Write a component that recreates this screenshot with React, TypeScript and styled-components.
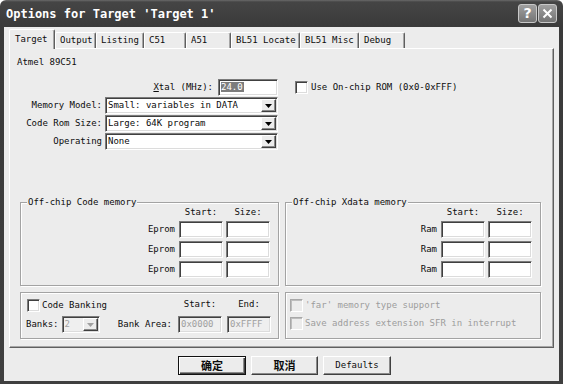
import React from 'react';
import styled, { createGlobalStyle, css } from 'styled-components';

const GlobalStyle = createGlobalStyle`
  html, body {
    margin: 0;
    padding: 0;
    background: #ffffff;
  }
  body {
    font-family: "DejaVu Sans Mono", "Liberation Mono", "Noto Sans CJK SC", monospace;
    font-size: 9px;
    line-height: 11px;
    color: #0c0c0c;
  }
`;

const sunken = css`
  box-sizing: border-box;
  border: 1px solid;
  border-color: #7b7b7b #ffffff #ffffff #7b7b7b;
  box-shadow: inset 1px 1px #404040, inset -1px -1px #dcdcdc;
`;

const raised = css`
  box-sizing: border-box;
  border: 1px solid;
  border-color: #ffffff #404040 #404040 #ffffff;
  box-shadow: inset -1px -1px #8a8a8a;
  background: #ececec;
`;

const Window = styled.div`
  width: 563px;
  height: 384px;
  box-sizing: border-box;
  display: flex;
  flex-direction: column;
  padding: 0 4px 3px;
  background: linear-gradient(#6a6a6a 0, #454545 2px, #3a3a3a 27px, #3f3f3f 100%);
  border-radius: 6px 6px 0 0;
  overflow: hidden;
`;

const TitleBar = styled.div`
  height: 27px;
  flex: none;
  display: flex;
  justify-content: space-between;
  padding: 0 2px;
`;

const TitleText = styled.div`
  color: #ffffff;
  font-size: 12px;
  font-weight: bold;
  line-height: 27px;
  padding-top: 1px;
`;

const CaptionButtons = styled.div`
  display: flex;
  gap: 1px;
  margin-top: 4px;
`;

const CaptionButton = styled.div`
  width: 19px;
  height: 19px;
  box-sizing: border-box;
  border: 1px solid #c8c8c8;
  border-radius: 3px;
  background: linear-gradient(#a0a0a0, #747474);
  color: #ffffff;
  display: flex;
  align-items: center;
  justify-content: center;
  font-family: "DejaVu Sans", sans-serif;
  font-size: 14px;
  font-weight: bold;
`;

const Client = styled.div`
  flex: 1;
  background: #ececec;
  display: flex;
  flex-direction: column;
  padding: 2px 5px 0;
`;

const TabStrip = styled.div`
  height: 19px;
  display: flex;
  align-items: flex-end;
  position: relative;
  z-index: 1;
`;

const Tab = styled.div<{ $active?: boolean; $w: number }>`
  width: ${p => p.$w}px;
  height: ${p => (p.$active ? 20 : 16)}px;
  margin-bottom: ${p => (p.$active ? -1 : 0)}px;
  box-sizing: border-box;
  padding-left: ${p => (p.$active ? 5 : 4)}px;
  padding-bottom: ${p => (p.$active ? 1 : 0)}px;
  display: flex;
  align-items: center;
  background: #ececec;
  border-top: 1px solid #ffffff;
  border-left: 1px solid #ffffff;
  border-right: 1px solid #5f5f5f;
  box-shadow: inset -1px 0 #a6a6a6;
  border-radius: 2px 2px 0 0;
`;

const Panel = styled.div`
  height: 300px;
  box-sizing: border-box;
  border: 1px solid;
  border-color: #ffffff #5f5f5f #5f5f5f #ffffff;
  box-shadow: inset -1px -1px #a6a6a6;
  padding: 8px 0 0 7px;
  display: flex;
  flex-direction: column;
`;

const DeviceName = styled.div`
  height: 11px;
`;

const FormGrid = styled.div`
  margin-top: 11px;
  display: grid;
  grid-template-columns: 85px 173px auto;
  grid-template-rows: repeat(4, 17px);
  column-gap: 3px;
  row-gap: 1px;
`;

const FieldLabel = styled.div`
  text-align: right;
  align-self: center;
  white-space: nowrap;
`;

const XtalRow = styled.div`
  grid-column: 1 / 3;
  display: flex;
  justify-content: flex-end;
  align-items: center;
  gap: 5px;
`;

const Hotkey = styled.span`
  text-decoration: underline;
`;

const TextBox = styled.div<{ $w: number; $disabled?: boolean }>`
  ${sunken};
  width: ${p => p.$w}px;
  height: 17px;
  background: ${p => (p.$disabled ? '#efefef' : '#ffffff')};
  color: ${p => (p.$disabled ? '#a0a0a0' : '#0c0c0c')};
  padding: 2px 0 0 2px;
  white-space: nowrap;
`;

const Selected = styled.span`
  background: #7c7c7c;
  color: #ffffff;
  padding-right: 1px;
`;

const Combo = styled.div<{ $w?: number; $disabled?: boolean }>`
  ${sunken};
  width: ${p => (p.$w ? `${p.$w}px` : 'auto')};
  height: 17px;
  display: flex;
  align-items: stretch;
  background: ${p => (p.$disabled ? '#efefef' : '#ffffff')};
  color: ${p => (p.$disabled ? '#a0a0a0' : '#0c0c0c')};
`;

const ComboValue = styled.div`
  flex: 1;
  padding: 2px 0 0 2px;
  white-space: nowrap;
  overflow: hidden;
`;

const ComboArrow = styled.div`
  ${raised};
  width: 15px;
  margin: 1px;
  display: flex;
  align-items: center;
  justify-content: center;
`;

const CheckRow = styled.div<{ $disabled?: boolean; $indent?: number }>`
  display: flex;
  align-items: center;
  gap: 2px;
  margin-left: ${p => p.$indent ?? 0}px;
  white-space: nowrap;
  color: ${p => (p.$disabled ? '#9d9d9d' : '#0c0c0c')};
`;

const CheckBox = styled.div<{ $disabled?: boolean }>`
  ${sunken};
  width: 13px;
  height: 13px;
  flex: none;
  background: ${p => (p.$disabled ? '#ececec' : '#ffffff')};
  ${p =>
    p.$disabled &&
    css`
      border-color: #a8a8a8 #ffffff #ffffff #a8a8a8;
      box-shadow: inset 1px 1px #bdbdbd;
    `}
`;

const RomOption = styled(CheckRow)`
  padding-left: 14px;
  gap: 3px;
`;

const GroupGrid = styled.div`
  margin: 52px 0 0 3px;
  display: grid;
  grid-template-columns: 259px 256px;
  grid-template-rows: 84px 47px;
  column-gap: 6px;
  row-gap: 6px;
`;

const Group = styled.div`
  position: relative;
  box-sizing: border-box;
  border: 1px solid #a3a3a3;
  box-shadow: inset 1px 1px #ffffff, 1px 1px #ffffff;
`;

const Caption = styled.div`
  position: absolute;
  top: -6px;
  left: 6px;
  padding: 0 1px;
  background: #ececec;
`;

const MemoryGrid = styled.div`
  display: grid;
  grid-template-columns: auto 44px 44px;
  grid-template-rows: 11px repeat(3, 17px);
  justify-content: end;
  column-gap: 3px;
  row-gap: 3px;
  padding: 4px 8px 0 0;

  & > :nth-child(3) {
    margin-bottom: 1px;
  }
`;

const ColHead = styled.div`
  text-align: center;
  white-space: nowrap;
`;

const RowLabel = styled.div`
  text-align: right;
  align-self: center;
  padding-right: 1px;
`;

const BankGrid = styled.div`
  display: grid;
  grid-template-columns: 1fr 44px 44px;
  grid-template-rows: 13px 17px;
  column-gap: 5px;
  row-gap: 4px;
  padding: 6px 7px 0 5px;
`;

const BankLine = styled.div`
  display: flex;
  align-items: center;
  gap: 3px;
`;

const BankAreaLabel = styled.div`
  margin-left: auto;
  padding-right: 1px;
`;

const OptionList = styled.div`
  display: flex;
  flex-direction: column;
  gap: 5px;
  padding: 6px 4px 0;
`;

const ButtonRow = styled.div`
  display: flex;
  justify-content: center;
  gap: 5px;
  margin-top: 8px;
  padding-left: 6px;
`;

const Button = styled.div<{ $w: number; $default?: boolean }>`
  ${raised};
  width: ${p => p.$w}px;
  height: 19px;
  display: flex;
  align-items: center;
  justify-content: center;
  ${p =>
    p.$default &&
    css`
      border: 1px solid #111;
      box-shadow: inset 1px 1px #ffffff, inset -1px -1px #404040, inset -2px -2px #8a8a8a;
    `}
`;

const CjkText = styled.span`
  font-family: "Noto Sans CJK SC", sans-serif;
  font-size: 11px;
  font-weight: bold;
`;

const DownArrow = ({ color = '#000' }: { color?: string }) => (
  <svg width="7" height="4" viewBox="0 0 7 4">
    <path d="M0 0h7L3.5 4z" fill={color} />
  </svg>
);

const ComboBox = ({ value, w, disabled }: { value: string; w?: number; disabled?: boolean }) => (
  <Combo $w={w} $disabled={disabled}>
    <ComboValue>{value}</ComboValue>
    <ComboArrow>
      <DownArrow color={disabled ? '#a0a0a0' : '#000'} />
    </ComboArrow>
  </Combo>
);

const tabs = [
  { label: 'Target', w: 46 },
  { label: 'Output', w: 41 },
  { label: 'Listing', w: 48 },
  { label: 'C51', w: 42 },
  { label: 'A51', w: 45 },
  { label: 'BL51 Locate', w: 69 },
  { label: 'BL51 Misc', w: 59 },
  { label: 'Debug', w: 46 }
];

const MemoryGroup = ({ title, row }: { title: string; row: string }) => (
  <Group>
    <Caption>{title}</Caption>
    <MemoryGrid>
      <div />
      <ColHead>Start:</ColHead>
      <ColHead>Size:</ColHead>
      {[0, 1, 2].map(i => (
        <React.Fragment key={i}>
          <RowLabel>{row}</RowLabel>
          <TextBox $w={44} />
          <TextBox $w={44} />
        </React.Fragment>
      ))}
    </MemoryGrid>
  </Group>
);

export default function App() {
  return (
    <>
      <GlobalStyle />
      <Window>
        <TitleBar>
          <TitleText>Options for Target 'Target 1'</TitleText>
          <CaptionButtons>
            <CaptionButton>?</CaptionButton>
            <CaptionButton>
              <svg width="11" height="11" viewBox="0 0 11 11">
                <path d="M1.5 1.5l8 8M9.5 1.5l-8 8" stroke="#fff" strokeWidth="2" />
              </svg>
            </CaptionButton>
          </CaptionButtons>
        </TitleBar>

        <Client>
          <TabStrip>
            {tabs.map((t, i) => (
              <Tab key={t.label} $w={t.w} $active={i === 0}>
                {t.label}
              </Tab>
            ))}
          </TabStrip>

          <Panel>
            <DeviceName>Atmel 89C51</DeviceName>

            <FormGrid>
              <XtalRow>
                <span>
                  <Hotkey>X</Hotkey>tal (MHz):
                </span>
                <TextBox $w={60}>
                  <Selected>24.0</Selected>
                </TextBox>
              </XtalRow>
              <RomOption>
                <CheckBox />
                Use On-chip ROM (0x0-0xFFF)
              </RomOption>

              <FieldLabel>Memory Model:</FieldLabel>
              <ComboBox value="Small: variables in DATA" />
              <div />

              <FieldLabel>Code Rom Size:</FieldLabel>
              <ComboBox value="Large: 64K program" />
              <div />

              <FieldLabel>Operating</FieldLabel>
              <ComboBox value="None" />
              <div />
            </FormGrid>

            <GroupGrid>
              <MemoryGroup title="Off-chip Code memory" row="Eprom" />
              <MemoryGroup title="Off-chip Xdata memory" row="Ram" />

              <Group>
                <BankGrid>
                  <CheckRow $indent={1}>
                    <CheckBox />
                    Code Banking
                  </CheckRow>
                  <ColHead>Start:</ColHead>
                  <ColHead>End:</ColHead>

                  <BankLine>
                    Banks:
                    <ComboBox value="2" w={38} disabled />
                    <BankAreaLabel>Bank Area:</BankAreaLabel>
                  </BankLine>
                  <TextBox $w={44} $disabled>0x0000</TextBox>
                  <TextBox $w={44} $disabled>0xFFFF</TextBox>
                </BankGrid>
              </Group>

              <Group>
                <OptionList>
                  <CheckRow $disabled>
                    <CheckBox $disabled />
                    'far' memory type support
                  </CheckRow>
                  <CheckRow $disabled>
                    <CheckBox $disabled />
                    Save address extension SFR in interrupt
                  </CheckRow>
                </OptionList>
              </Group>
            </GroupGrid>
          </Panel>

          <ButtonRow>
            <Button $w={68} $default>
              <CjkText>确定</CjkText>
            </Button>
            <Button $w={67}>
              <CjkText>取消</CjkText>
            </Button>
            <Button $w={68}>Defaults</Button>
          </ButtonRow>
        </Client>
      </Window>
    </>
  );
}
